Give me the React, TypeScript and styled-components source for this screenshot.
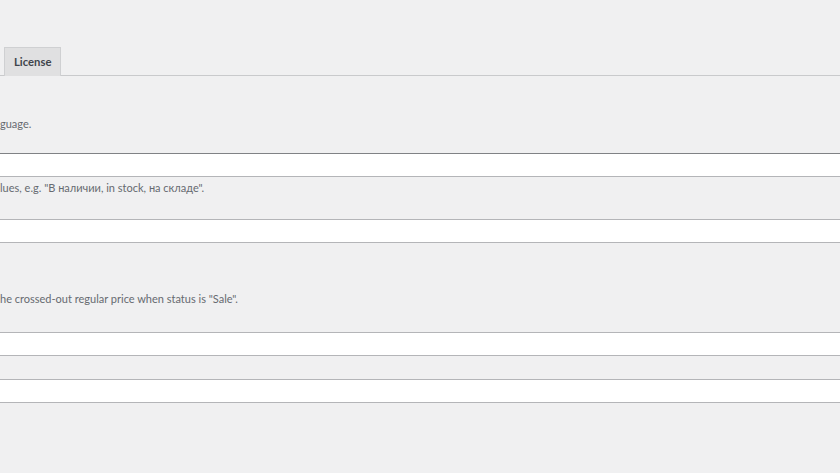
import React from 'react';
import styled, { createGlobalStyle } from 'styled-components';

const GlobalStyle = createGlobalStyle`
  html, body {
    margin: 0;
    padding: 0;
    background: #f0f0f1;
    overflow: hidden;
  }
  body {
    font-family: Lato, "Liberation Sans", sans-serif;
  }
`

const Page = styled.div`
  width: 840px;
  height: 473px;
  padding-top: 47px;
  box-sizing: border-box;
  overflow: hidden;
`

const TabBar = styled.div`
  display: flex;
  padding-left: 4px;
  border-bottom: 1px solid #c9cacc;
`

const Tab = styled.div`
  height: 29px;
  padding: 0 9px 2px;
  box-sizing: border-box;
  display: flex;
  align-items: center;
  background: #e0e0e1;
  border: 1px solid #cfd0d2;
  border-bottom: none;
  font-size: 11.3px;
  font-weight: 700;
  color: #3f454c;
  margin-bottom: -1px;
`

const Hint = styled.p<{ $top: number }>`
  margin: ${p => p.$top}px 0 0;
  height: 14px;
  line-height: 14px;
  font-size: 11px;
  color: #666a70;
  white-space: nowrap;
`

const Field = styled.input<{ $top: number; $focus?: boolean }>`
  display: block;
  width: 900px;
  height: 24px;
  margin: ${p => p.$top}px 0 0 -4px;
  padding: 0 8px;
  box-sizing: border-box;
  background: #ffffff;
  border: none;
  border-top: 1px solid ${p => (p.$focus ? '#808285' : '#b4b5b8')};
  border-bottom: 1px solid #b4b5b8;
  outline: none;
`

const App = () => {
  return (
    <>
      <GlobalStyle />
      <Page>
        <TabBar>
          <Tab>License</Tab>
        </TabBar>
        <Hint $top={41}>guage.</Hint>
        <Field $top={22} $focus />
        <Hint $top={4}>lues, e.g. "В наличии, in stock, на складе".</Hint>
        <Field $top={24} />
        <Hint $top={49}>he crossed-out regular price when status is "Sale".</Hint>
        <Field $top={26} />
        <Field $top={23} />
      </Page>
    </>
  );
};

export default App;
